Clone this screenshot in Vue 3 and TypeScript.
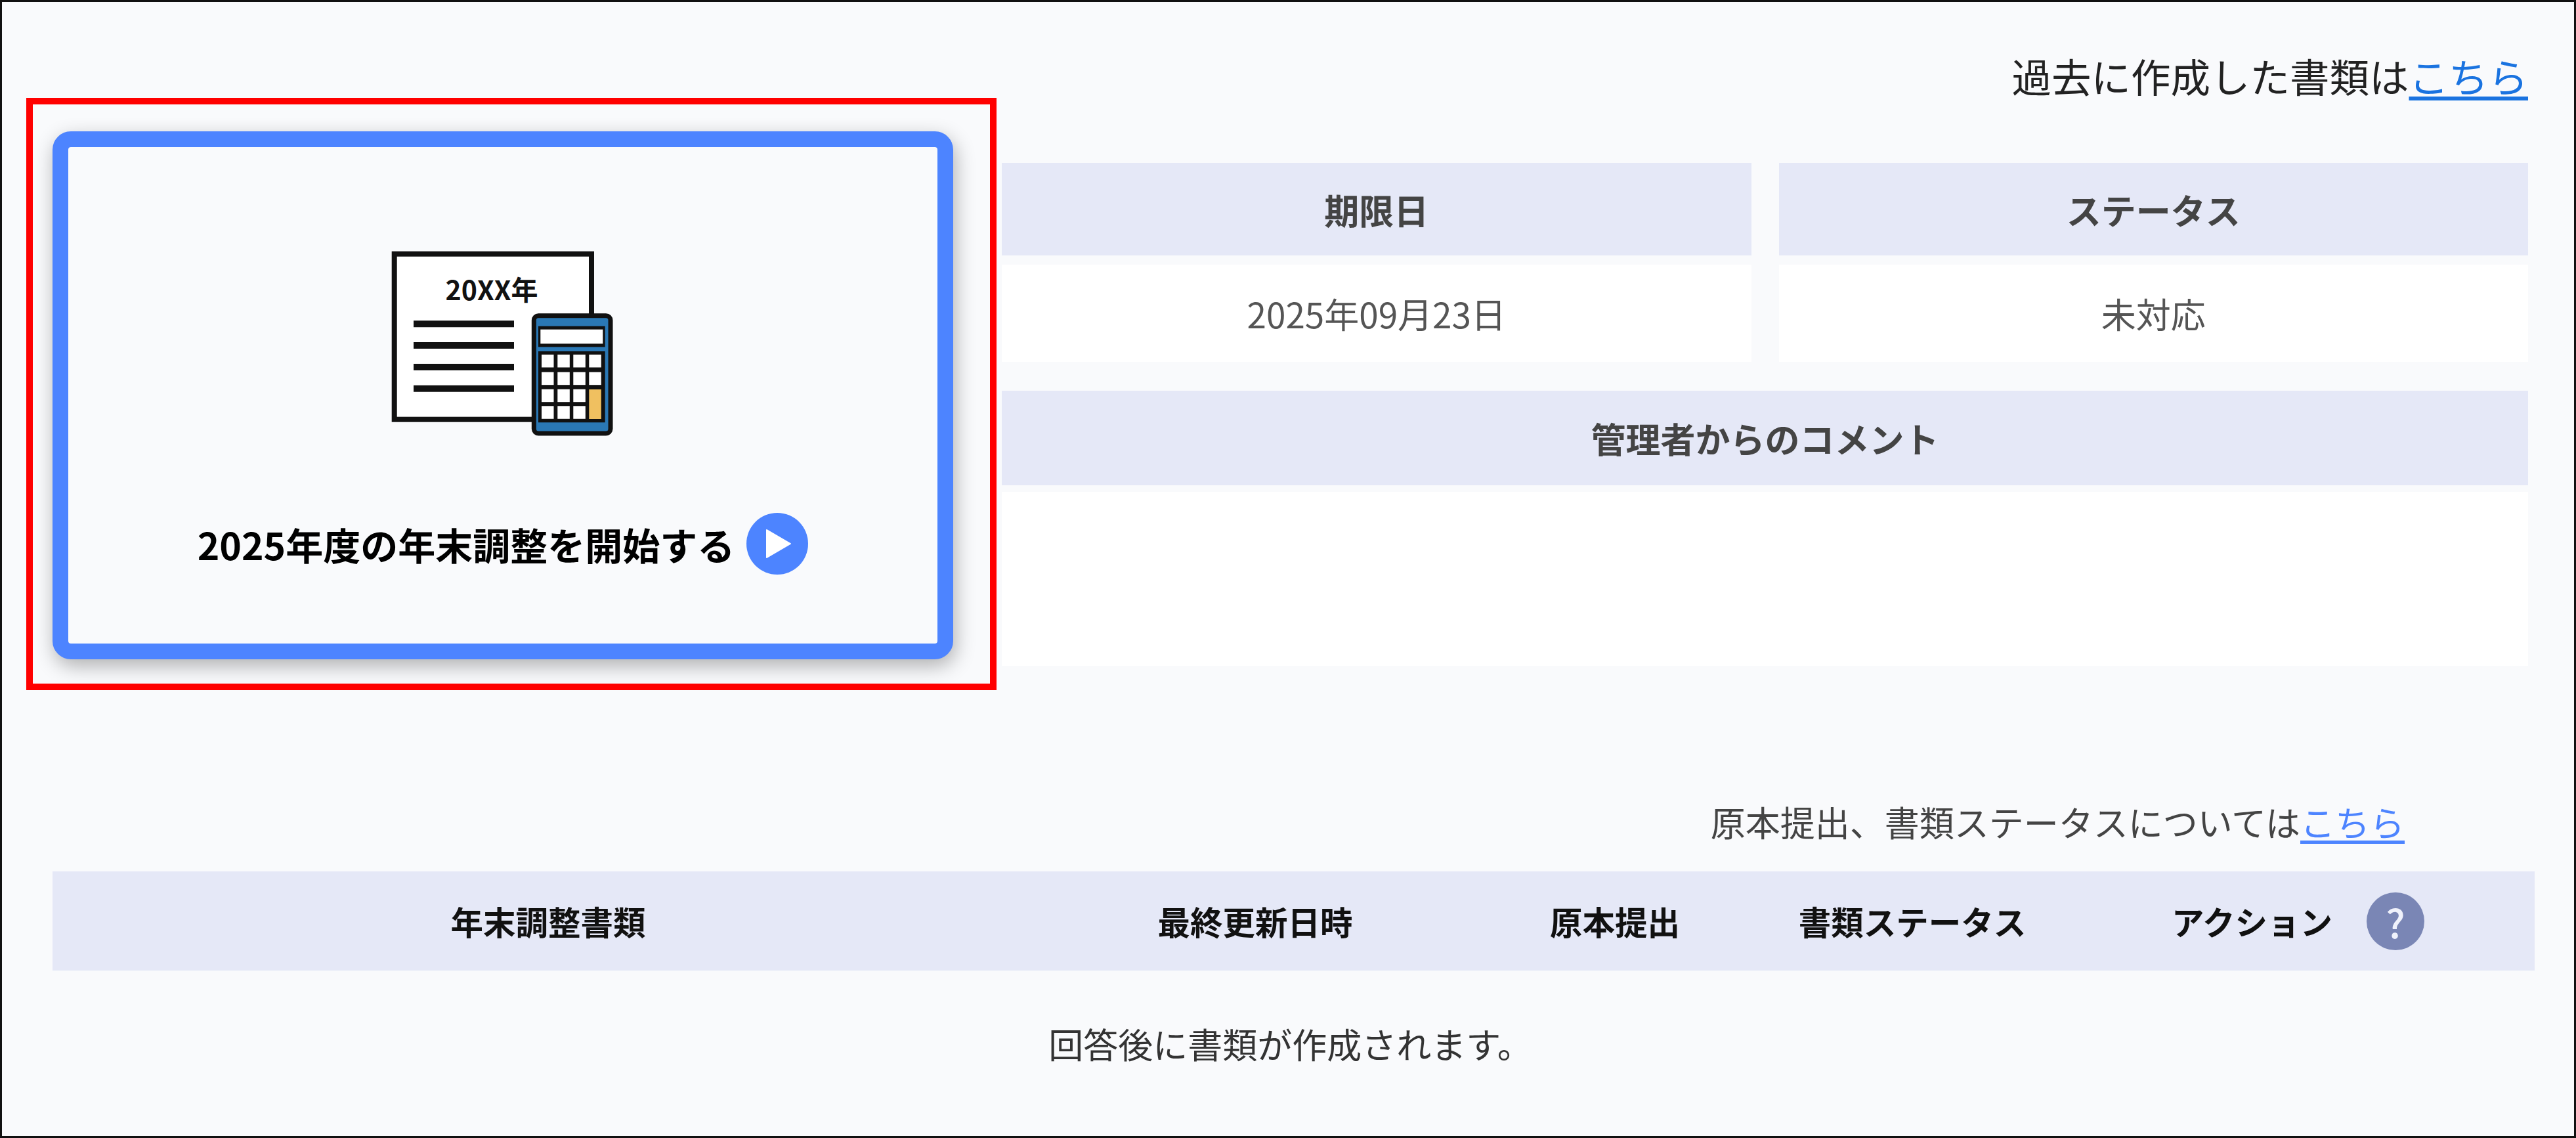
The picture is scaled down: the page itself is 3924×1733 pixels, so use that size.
<script setup lang="ts">
type InfoCell = { label: string; value: string }
type Column = { label: string; help?: boolean }

const infoCells: InfoCell[] = [
  { label: '期限日', value: '2025年09月23日' },
  { label: 'ステータス', value: '未対応' },
]

const columns: Column[] = [
  { label: '年末調整書類' },
  { label: '最終更新日時' },
  { label: '原本提出' },
  { label: '書類ステータス' },
  { label: 'アクション', help: true },
]

const keyXs = [229, 253.3, 277.3, 301.3]
const keyYs = [158, 184.7, 210.7, 236.3]

// the last column holds one tall yellow key over the two bottom rows
const keys = keyYs.flatMap((y, row) =>
  keyXs
    .filter((_, col) => !(col === 3 && row >= 2))
    .map((x) => ({ x, y })),
)
const docLines = [111.3, 144, 177, 209.7]
</script>

<template>
  <div class="page">
    <section class="main">
      <div class="highlight">
        <button class="start-card" type="button">
          <svg class="illustration" viewBox="0 0 340 284" width="340" height="284">
            <rect x="4.7" y="4.7" width="300.3" height="252" fill="#fff" stroke="#111" stroke-width="8" />
            <text class="year" x="153" y="75" text-anchor="middle">20XX年</text>
            <line
              v-for="y in docLines"
              :key="y"
              x1="34"
              x2="187"
              :y1="y"
              :y2="y"
              stroke="#111"
              stroke-width="10"
            />
            <rect x="217.3" y="98.7" width="116.7" height="179.3" rx="7" fill="#2a78b5" stroke="#111" stroke-width="7" />
            <rect x="224" y="114.7" width="101.7" height="31.7" fill="#111" />
            <rect x="227.3" y="119.7" width="95" height="21.7" fill="#fff" />
            <rect x="224" y="153" width="101.7" height="108.3" fill="#111" />
            <rect
              v-for="k in keys"
              :key="`${k.x}-${k.y}`"
              :x="k.x"
              :y="k.y"
              width="18.5"
              height="19.5"
              fill="#fff"
            />
            <rect x="301.3" y="211" width="18.5" height="45" fill="#f0c060" />
          </svg>
          <span class="start-label">
            2025年度の年末調整を開始する
            <svg class="play" viewBox="0 0 94 94" width="94" height="94">
              <circle cx="47" cy="47" r="47" fill="#4d84ff" />
              <path d="M31 26 L67 47 L31 68 Z" fill="#fff" stroke="#fff" stroke-width="2" stroke-linejoin="round" />
            </svg>
          </span>
        </button>
      </div>

      <div class="side">
        <p class="past-link">過去に作成した書類は<a href="#">こちら</a></p>
        <div class="info-grid">
          <div v-for="cell in infoCells" :key="cell.label" class="info-cell">
            <div class="head head-short">{{ cell.label }}</div>
            <div class="value">{{ cell.value }}</div>
          </div>
        </div>
        <div class="head head-comment">管理者からのコメント</div>
        <div class="comment"></div>
      </div>
    </section>

    <section class="documents">
      <p class="doc-note">原本提出、書類ステータスについては<a href="#">こちら</a></p>
      <div class="doc-head">
        <div v-for="col in columns" :key="col.label" class="doc-col" :class="{ 'has-help': col.help }">
          <span>{{ col.label }}</span>
          <span v-if="col.help" class="help">?</span>
        </div>
      </div>
      <p class="empty">回答後に書類が作成されます。</p>
    </section>
  </div>
</template>

<style>
html,
body {
  margin: 0;
  padding: 0;
}
</style>

<style scoped>
.page {
  box-sizing: border-box;
  width: 3924px;
  height: 1733px;
  padding: 77px 70px 0 37px;
  border: 3px solid #111;
  background: #f9fafc;
  font-family: "Noto Sans CJK JP", "Noto Sans", sans-serif;
  color: #333;
}

.main {
  display: flex;
  align-items: flex-start;
  gap: 8px;
}

.highlight {
  box-sizing: border-box;
  flex: none;
  width: 1478px;
  height: 902px;
  margin-top: 69px;
  padding: 41px 56px 37px 30px;
  border: 10px solid #ff0000;
}

.start-card {
  box-sizing: border-box;
  display: flex;
  flex-direction: column;
  align-items: center;
  width: 1372px;
  height: 804px;
  padding: 158px 0 0;
  border: 24px solid #4d84ff;
  border-radius: 28px;
  background: #f9fafc;
  box-shadow: 3px 10px 30px rgba(0, 0, 0, 0.3);
  font-family: inherit;
}

.illustration {
  display: block;
}

.year {
  font-size: 41px;
  font-weight: 700;
  fill: #111;
}

.start-label {
  display: flex;
  align-items: center;
  gap: 18px;
  height: 94px;
  margin-top: 115px;
  font-size: 57px;
  font-weight: 700;
  color: #000;
  white-space: nowrap;
}

.play {
  display: block;
  flex: none;
}

.side {
  flex: 1;
  min-width: 0;
}

.past-link {
  height: 168px;
  margin: 0;
  font-size: 60.5px;
  line-height: 70px;
  text-align: right;
  color: #222;
}

.past-link a {
  color: #1a73e0;
  text-underline-offset: 6px;
}

.info-grid {
  display: grid;
  grid-template-columns: 1fr 1fr;
  gap: 42px;
}

.head {
  display: flex;
  align-items: center;
  justify-content: center;
  background: #e5e8f7;
  font-size: 53px;
  font-weight: 700;
  color: #444;
}

.head-short {
  height: 141px;
}

.value {
  display: flex;
  align-items: center;
  justify-content: center;
  height: 148px;
  margin-top: 14px;
  background: #fff;
  font-size: 53px;
  color: #555;
}

.head-comment {
  height: 144px;
  margin-top: 44px;
}

.comment {
  height: 265px;
  margin-top: 10px;
  background: #fff;
}

.documents {
  margin: 142px -10px 0 40px;
}

.doc-note {
  box-sizing: border-box;
  display: flex;
  align-items: flex-start;
  justify-content: flex-end;
  height: 134px;
  margin: 0;
  padding: 20px 198px 0 0;
  font-size: 53px;
  line-height: 76px;
  color: #444;
  white-space: nowrap;
}

.doc-note a {
  color: #4d84ff;
  text-underline-offset: 6px;
}

.doc-head {
  display: grid;
  grid-template-columns: 1510px 644px 452px 454px 1fr;
  height: 151px;
  background: #e5e8f7;
  font-size: 49.5px;
  font-weight: 700;
  color: #111;
}

.doc-col {
  display: flex;
  align-items: center;
  justify-content: center;
}

.doc-col.has-help {
  justify-content: flex-start;
  gap: 52px;
  padding-left: 168px;
}

.help {
  display: flex;
  align-items: center;
  justify-content: center;
  width: 88px;
  height: 88px;
  border-radius: 50%;
  background: #7a86b5;
  font-size: 60px;
  font-weight: 500;
  color: #f0f2fb;
}

.empty {
  margin: 0;
  padding: 75px 10px 0 0;
  font-size: 53px;
  line-height: 72px;
  text-align: center;
  color: #333;
}
</style>
